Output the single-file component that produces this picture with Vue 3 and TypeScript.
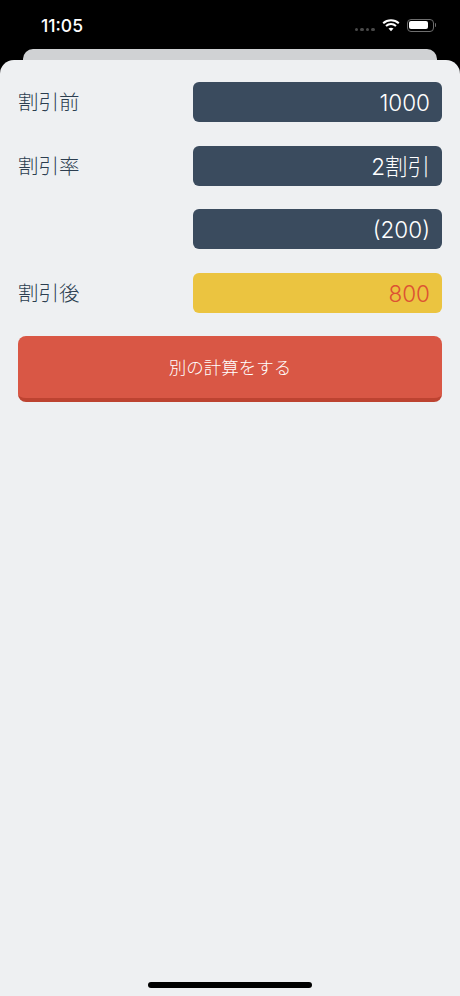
<script setup lang="ts">
interface Row {
  label: string;
  value: string;
  highlight?: boolean;
}

const rows: Row[] = [
  { label: '割引前', value: '1000' },
  { label: '割引率', value: '2割引' },
  { label: '', value: '(200)' },
  { label: '割引後', value: '800', highlight: true }
];
</script>

<template>
  <div class="screen">
    <div class="status-bar">
      <span class="time">11:05</span>
      <div class="status-icons">
        <div class="signal">
          <i></i><i></i><i></i><i></i>
        </div>
        <svg class="wifi" width="18" height="14" viewBox="0 0 18 14">
          <path d="M1.2 5.2C5.6 1.2 12.4 1.2 16.8 5.2" fill="none" stroke="#fff" stroke-width="2.1" />
          <path d="M4 8C6.9 5.5 11.1 5.5 14 8" fill="none" stroke="#fff" stroke-width="2.1" />
          <path d="M6.5 10.6 9 13.2l2.5-2.6C10 9.4 8 9.4 6.5 10.6Z" fill="#fff" />
        </svg>
        <div class="battery">
          <div class="battery-body"><div class="battery-fill"></div></div>
          <div class="battery-cap"></div>
        </div>
      </div>
    </div>

    <div class="back-card"></div>

    <div class="sheet">
      <div class="rows">
        <div v-for="row in rows" :key="row.value" class="row">
          <span class="label">{{ row.label }}</span>
          <div class="value" :class="{ highlight: row.highlight }">{{ row.value }}</div>
        </div>
      </div>
      <button class="again">別の計算をする</button>
      <div class="home-indicator"></div>
    </div>
  </div>
</template>

<style scoped>
.screen {
  width: 460px;
  height: 996px;
  background: #000;
  display: flex;
  flex-direction: column;
  overflow: hidden;
  font-family: "Noto Sans CJK JP", "Liberation Sans", sans-serif;
}

.status-bar {
  height: 49px;
  flex-shrink: 0;
  display: flex;
  align-items: flex-start;
  justify-content: space-between;
  padding: 0 24px 0 41px;
  box-sizing: border-box;
}

.time {
  margin-top: 13px;
  font-family: Inter, "Liberation Sans", sans-serif;
  font-size: 17.5px;
  line-height: 26px;
  font-weight: 500;
  color: #fff;
}

.status-icons {
  display: flex;
  align-items: center;
  gap: 7px;
  margin-top: 18px;
}

.signal {
  display: flex;
  gap: 2px;
  margin-top: 9px;
}

.signal i {
  width: 3.5px;
  height: 3.5px;
  border-radius: 50%;
  background: #4a4a4a;
}

.wifi {
  display: block;
}

.battery {
  display: flex;
  align-items: center;
  gap: 1px;
}

.battery-body {
  width: 27px;
  height: 13px;
  box-sizing: border-box;
  border: 1px solid #6e6e6e;
  border-radius: 4px;
  padding: 1.5px;
}

.battery-fill {
  width: 19px;
  height: 100%;
  background: #fff;
  border-radius: 2px;
}

.battery-cap {
  width: 1.5px;
  height: 4px;
  background: #6e6e6e;
  border-radius: 0 1px 1px 0;
}

.back-card {
  height: 11px;
  flex-shrink: 0;
  margin: 0 23px;
  background: #d0d2d4;
  border-radius: 10px 10px 0 0;
}

.sheet {
  flex: 1;
  display: flex;
  flex-direction: column;
  background: #eef0f2;
  border-radius: 14px 14px 0 0;
  padding: 22px 18px 8px;
}

.rows {
  display: flex;
  flex-direction: column;
  gap: 23.6px;
}

.row {
  display: flex;
  align-items: center;
  justify-content: space-between;
}

.label {
  font-size: 20.5px;
  line-height: 28px;
  font-weight: 300;
  color: #2c3e50;
  margin-top: -2px;
}

.value {
  width: 249px;
  height: 40px;
  box-sizing: border-box;
  padding: 0 12px;
  background: #3a4b5e;
  border-radius: 6px;
  font-family: Inter, "Noto Sans CJK JP", sans-serif;
  font-size: 22.5px;
  font-weight: 300;
  line-height: 41px;
  text-align: right;
  color: #fff;
}

.value.highlight {
  background: #ebc440;
  color: #dd5233;
}

.again {
  display: block;
  width: 100%;
  height: 66px;
  margin-top: 23px;
  padding: 0;
  border: 0;
  border-bottom: 4px solid #bd4331;
  border-radius: 8px;
  background: #d95745;
  color: #fff;
  font-family: inherit;
  font-size: 17.5px;
  font-weight: 300;
}

.home-indicator {
  width: 164px;
  height: 6px;
  margin: auto auto 0;
  border-radius: 3px;
  background: #000;
}
</style>

<style>
html,
body {
  margin: 0;
  background: #000;
}
</style>
